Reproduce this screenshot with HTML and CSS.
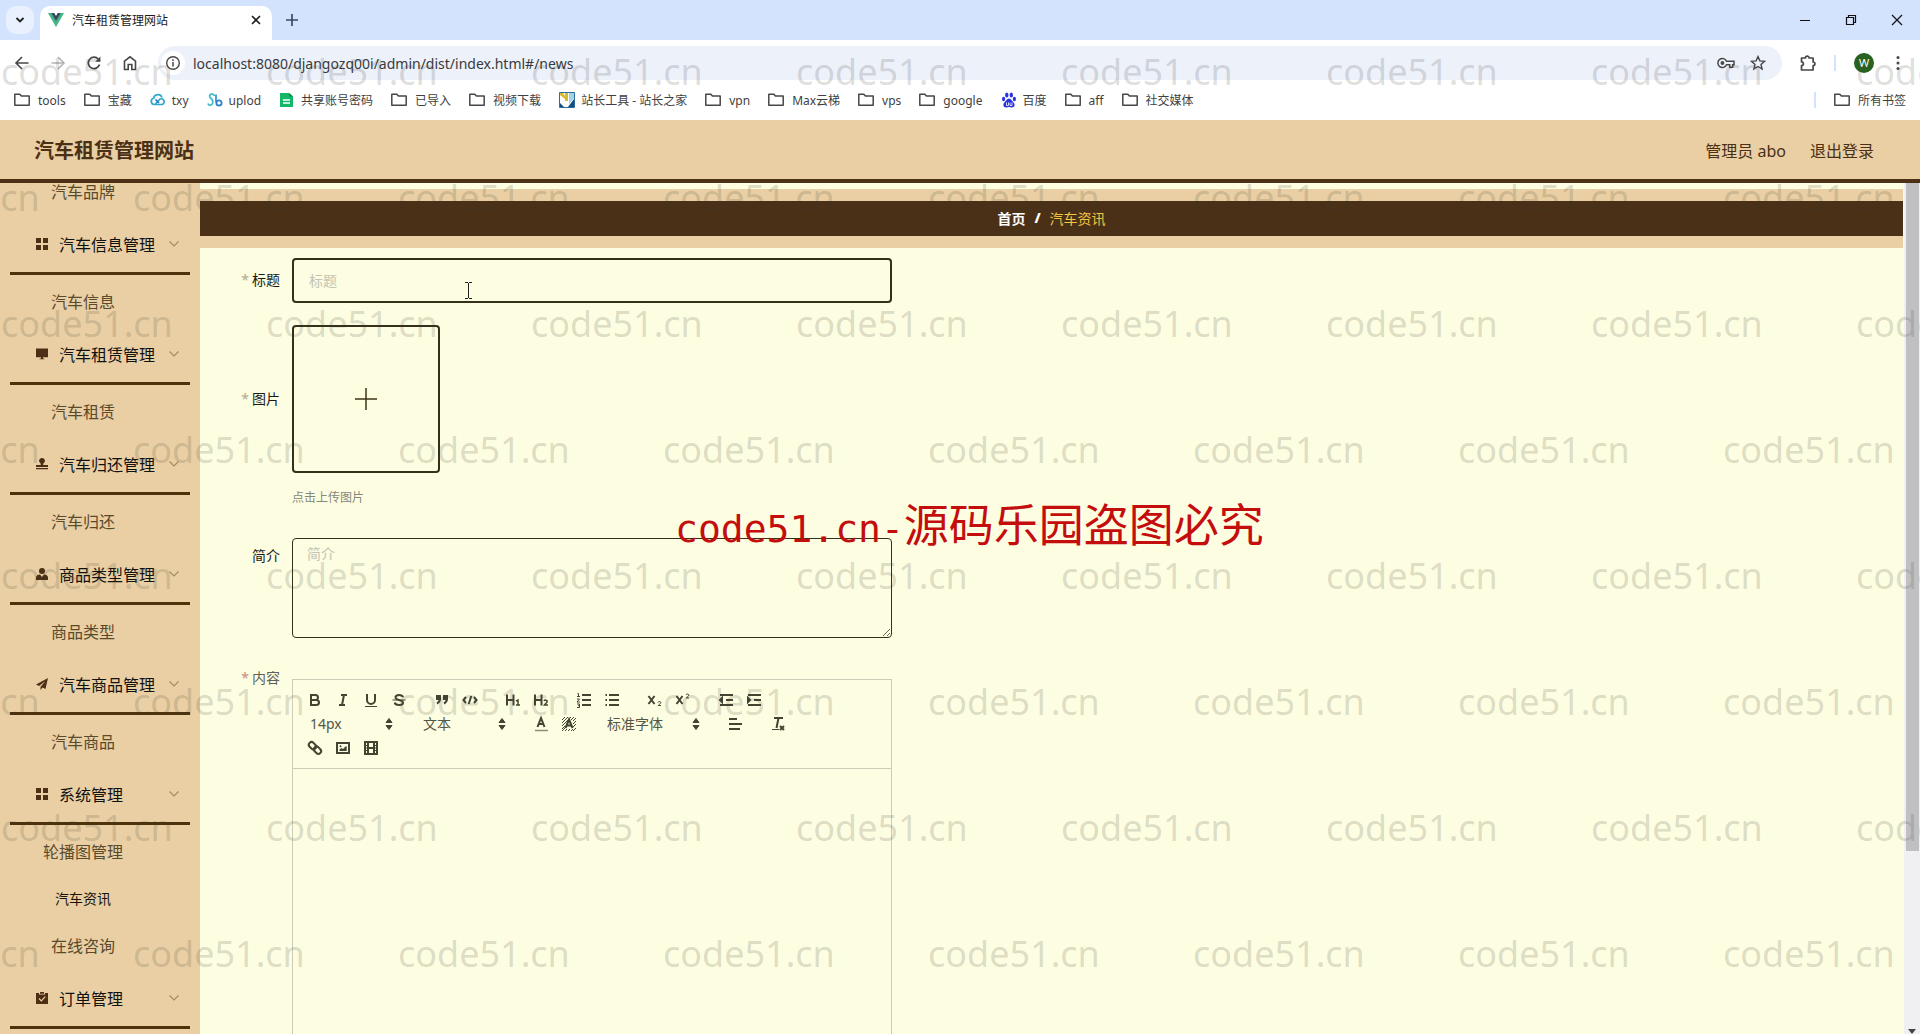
FILE: index.html
```html
<!DOCTYPE html>
<html lang="zh-CN">
<head>
<meta charset="utf-8">
<title>汽车租赁管理网站</title>
<link rel="stylesheet" href="styles.css">
</head>
<body>
<svg class="sprite" aria-hidden="true">
  <symbol id="folder" viewBox="0 0 16 16"><path d="M.8 2.200h5l1.600 1.900h7.800v9.200H.8z" fill="none" stroke="#474747" stroke-width="1.500" stroke-linejoin="round"/></symbol>
  <symbol id="chev" viewBox="0 0 12 12"><path d="M1.500 3.500 6 8l4.500-4.500" fill="none" stroke="#a58a5e" stroke-width="1.100"/></symbol>
  <symbol id="grid" viewBox="0 0 12 12"><path d="M0 0h5v5H0zM7 0h5v5H7zM0 7h5v5H0zM7 7h5v5H7z"/></symbol>
  <symbol id="updown" viewBox="0 0 18 18"><path d="M9 3.500 12 7.500H6zM9 14.500l3-4H6z" fill="#444433" stroke="#444433" stroke-linejoin="round"/></symbol>
</svg>

<header class="browser">
  <div class="tabs">
    <button class="tab-search" aria-label="搜索标签页"><svg width="12" height="12" viewBox="0 0 12 12"><path d="m2.500 4 3.500 3.500L9.500 4" fill="none" stroke="#1f1f1f" stroke-width="1.800"/></svg></button>
    <div class="tab">
      <svg width="16" height="16" viewBox="0 0 16 16"><path d="M0 1h3.300L8 9l4.700-8H16L8 15z" fill="#41b883"/><path d="M3.200 1h3L8 4.100 9.800 1h3L8 9.300z" fill="#34495e"/></svg>
      <span>汽车租赁管理网站</span>
      <button class="plain" aria-label="关闭标签页"><svg width="12" height="12" viewBox="0 0 12 12"><path d="m2 2 8 8M10 2l-8 8" stroke="#1f1f1f" stroke-width="1.600"/></svg></button>
    </div>
    <button class="plain new-tab" aria-label="新标签页"><svg width="12" height="12" viewBox="0 0 12 12"><path d="M6 0v12M0 6h12" stroke="#3c4a66" stroke-width="1.700"/></svg></button>
    <div class="window-buttons">
      <button class="plain" aria-label="最小化"><svg width="12" height="12" viewBox="0 0 12 12"><path d="M1 6.500h10" stroke="#111"/></svg></button>
      <button class="plain" aria-label="还原"><svg width="12" height="12" viewBox="0 0 12 12"><path d="M1.500 3.500h7v7h-7zM3.500 3.500v-2h7v7h-2" fill="none" stroke="#111" stroke-width="1.200"/></svg></button>
      <button class="plain" aria-label="关闭"><svg width="12" height="12" viewBox="0 0 12 12"><path d="m1 1 10 10M11 1 1 11" stroke="#111" stroke-width="1.200"/></svg></button>
    </div>
  </div>
  <div class="toolbar">
    <button class="plain" aria-label="后退"><svg width="16" height="16" viewBox="0 0 16 16"><path d="M14.500 8H2M8 2 2 8l6 6" fill="none" stroke="#474747" stroke-width="1.600"/></svg></button>
    <button class="plain" aria-label="前进"><svg width="16" height="16" viewBox="0 0 16 16"><path d="M1.500 8H14M8 2l6 6-6 6" fill="none" stroke="#b4b4b4" stroke-width="1.600"/></svg></button>
    <button class="plain" aria-label="重新加载"><svg width="16" height="16" viewBox="0 0 16 16"><path d="M13.500 9.500A5.700 5.700 0 1 1 12.200 4L14 6" fill="none" stroke="#474747" stroke-width="1.700"/><path d="M14.400 1.500v5.300H9.200z" fill="#474747"/></svg></button>
    <button class="plain" aria-label="主页"><svg width="16" height="16" viewBox="0 0 16 16"><path d="M2.500 6.200 8 1.800l5.500 4.400v8.300h-3.700v-5H6.200v5H2.500z" fill="none" stroke="#474747" stroke-width="1.600"/></svg></button>
    <div class="omnibox">
      <span class="site-info"><svg width="16" height="16" viewBox="0 0 16 16"><circle cx="8" cy="8" r="6.300" fill="none" stroke="#474747" stroke-width="1.400"/><path d="M8 7v4.500M8 4.300V6" stroke="#474747" stroke-width="1.500"/></svg></span>
      <input class="url" type="text" aria-label="地址" value="localhost:8080/djangozq00i/admin/dist/index.html#/news">
      <button class="plain" aria-label="密码"><svg width="20" height="16" viewBox="0 0 20 16"><path d="M10.500 6.200H18v3.600h-1.300v2.400h-3V9.800h-3.200a4.500 4.500 0 1 1 0-3.600z" fill="none" stroke="#474747" stroke-width="1.500"/><circle cx="6.400" cy="8" r="1.900" fill="#474747"/></svg></button>
      <button class="plain" aria-label="收藏"><svg width="16" height="16" viewBox="0 0 16 16"><path d="m8 1.600 1.900 4.300 4.700.4L11 9.400l1.100 4.600L8 11.500 3.900 14 5 9.400 1.400 6.300l4.700-.4z" fill="none" stroke="#474747" stroke-width="1.400"/></svg></button>
    </div>
    <button class="plain ext" aria-label="扩展程序"><svg width="18" height="18" viewBox="0 0 18 18"><path d="M2.500 4h4a1.800 1.800 0 0 1 3.600 0h4v4a1.800 1.800 0 0 1 0 3.600v4.400H2.500v-4.400a1.900 1.900 0 0 0 0-3.800z" fill="none" stroke="#474747" stroke-width="1.700" stroke-linejoin="round"/></svg></button>
    <i class="sep"></i>
    <button class="avatar" aria-label="个人资料">W</button>
    <button class="plain" aria-label="菜单"><svg width="16" height="16" viewBox="0 0 16 16" fill="#474747"><circle cx="8" cy="2.500" r="1.500"/><circle cx="8" cy="8" r="1.500"/><circle cx="8" cy="13.500" r="1.500"/></svg></button>
  </div>
  <nav class="bookmarks">
    <a href="#"><svg><use href="#folder"/></svg>tools</a>
    <a href="#"><svg><use href="#folder"/></svg>宝藏</a>
    <a href="#" class="site"><svg viewBox="0 0 16 16" fill="none" stroke-width="1.700"><path d="M5 12.500 10 7a2.800 2.800 0 1 1 2.300 5.500H4.300A3.200 3.200 0 0 1 3.700 6.200 4.300 4.300 0 0 1 12 5.500" stroke="#2ea9c9"/><path d="M5.500 7.500 9 11" stroke="#2878d8"/></svg>txy</a>
    <a href="#" class="site"><svg viewBox="0 0 16 16" fill="none" stroke-width="1.800"><path d="M7.200 4A2.300 2.300 0 1 0 3.300 5.800C5.500 7.500 6.500 9 5.500 11.500S1.500 13.500 1 11.500" stroke="#45bdc9"/><path d="M9 2.500v8" stroke="#3399d6"/><circle cx="12" cy="10.900" r="2.600" stroke="#3182ce"/></svg>uplod</a>
    <a href="#" class="site"><svg viewBox="0 0 16 16"><path d="M1 1h9l4 3.500V15H1z" fill="#12b76a"/><path d="M10 1v3.500h4z" fill="#0a8b4e"/><path d="M4 8h7M4 11h7" stroke="#fff" stroke-width="1.300"/></svg>共享账号密码</a>
    <a href="#"><svg><use href="#folder"/></svg>已导入</a>
    <a href="#"><svg><use href="#folder"/></svg>视频下载</a>
    <a href="#" class="site"><svg viewBox="0 0 16 16"><path d="M.5.5h15v15H.5z" fill="#fff" stroke="#2b6e9c"/><path d="M1 1h3l2 3 2-3v8H6V7L1 3z" fill="#d9b92e"/><path d="M6 1h3v8H6z" fill="#d9b92e"/><path d="M10 1h5v5l-5 6z" fill="#9fd3e8"/><path d="m15 7-6 8h6zM1 11l4 4H1z" fill="#164d7c"/></svg>站长工具 - 站长之家</a>
    <a href="#"><svg><use href="#folder"/></svg>vpn</a>
    <a href="#"><svg><use href="#folder"/></svg>Max云梯</a>
    <a href="#"><svg><use href="#folder"/></svg>vps</a>
    <a href="#"><svg><use href="#folder"/></svg>google</a>
    <a href="#" class="site"><svg viewBox="0 0 16 16" fill="#2932e1"><ellipse cx="5.800" cy="3" rx="1.700" ry="2.500"/><ellipse cx="10.300" cy="3" rx="1.700" ry="2.500"/><ellipse cx="2.600" cy="7" rx="1.600" ry="2.200"/><ellipse cx="13.400" cy="7" rx="1.600" ry="2.200"/><path d="M8 6.500c2 0 3 2.500 4.600 4 1.800 1.800 1 5-1.600 5-1.200 0-2-.400-3-.400s-1.800.400-3 .400c-2.600 0-3.400-3.200-1.600-5C5 9 6 6.500 8 6.500z"/><path d="M5.500 10.500v3h2v-3M9 10.500v3h2v-3" fill="none" stroke="#fff" stroke-width=".8"/></svg>百度</a>
    <a href="#"><svg><use href="#folder"/></svg>aff</a>
    <a href="#"><svg><use href="#folder"/></svg>社交媒体</a>
    <i class="sep"></i>
    <a href="#"><svg><use href="#folder"/></svg>所有书签</a>
  </nav>
</header>

<header class="app-header">
  <h1>汽车租赁管理网站</h1>
  <span>管理员 abo</span>
  <a href="#">退出登录</a>
</header>

<div class="app">
  <aside class="sidebar">
    <nav class="menu">
      <div class="subs"><a href="#">汽车品牌</a></div>
      <button><svg><use href="#grid"/></svg>汽车信息管理<svg class="chev"><use href="#chev"/></svg></button>
      <div class="subs"><a href="#">汽车信息</a></div>
      <button><svg viewBox="0 0 12 12"><path d="M0 .5h12v8.700H0zM5 9h2v1.200l2 1.100H3l2-1.100z"/></svg>汽车租赁管理<svg class="chev"><use href="#chev"/></svg></button>
      <div class="subs"><a href="#">汽车租赁</a></div>
      <button><svg viewBox="0 0 12 12"><path d="M6 0a2.800 2.800 0 0 1 1.800 5c-.700.700-.600 1.500-.600 2H12v2H0V7h4.800c0-.500.100-1.300-.600-2A2.800 2.800 0 0 1 6 0zM0 10h12v1.300H0z"/></svg>汽车归还管理<svg class="chev"><use href="#chev"/></svg></button>
      <div class="subs"><a href="#">汽车归还</a></div>
      <button><svg viewBox="0 0 12 12"><circle cx="6" cy="3" r="3"/><path d="M0 12V9.500C0 7.500 2 6.500 4 6.500L6 9l2-2.500c2 0 4 1 4 3V12z"/></svg>商品类型管理<svg class="chev"><use href="#chev"/></svg></button>
      <div class="subs"><a href="#">商品类型</a></div>
      <button><svg viewBox="0 0 12 12"><path d="M12 0 0 6.500l3 1.500L9.500 3 4.500 8.700V12l2-2.500L9.500 11z"/></svg>汽车商品管理<svg class="chev"><use href="#chev"/></svg></button>
      <div class="subs"><a href="#">汽车商品</a></div>
      <button><svg><use href="#grid"/></svg>系统管理<svg class="chev"><use href="#chev"/></svg></button>
      <div class="subs"><a href="#">轮播图管理</a><a href="#" class="active">汽车资讯</a><a href="#">在线咨询</a></div>
      <button><svg viewBox="0 0 12 12"><path d="M0 1h3v1.500h6V1h3v11H0zM4 0h4v1.700H4z"/><path d="m3 6.500 2.300 2.300L9.300 4.600" fill="none" stroke="#e9cfa3" stroke-width="1.200"/></svg>订单管理<svg class="chev"><use href="#chev"/></svg></button>
    </nav>
  </aside>

  <main class="main">
    <div class="crumb-wrap">
      <nav class="crumb"><a href="#">首页</a><b>/</b><span>汽车资讯</span></nav>
    </div>
    <form class="form">
      <div class="row">
        <label class="label mid" for="title"><em>*</em>标题</label>
        <input class="title" id="title" type="text" placeholder="标题">
      </div>
      <div class="row">
        <label class="label photo" for="photo"><em>*</em>图片</label>
        <div class="field">
          <button type="button" class="upload" id="photo" aria-label="上传图片"><svg width="28" height="28" viewBox="0 0 28 28"><path d="M14 3v22M3 14h22" stroke="#3d3418" stroke-width="1.500"/></svg></button>
          <p class="hint">点击上传图片</p>
        </div>
      </div>
      <div class="row">
        <label class="label" for="intro">简介</label>
        <textarea class="intro" id="intro" placeholder="简介"></textarea>
      </div>
      <div class="row grow">
        <span class="label soft" id="content-label"><em>*</em>内容</span>
        <div class="editor">
          <div class="tools">
            <div class="group">
              <button type="button" aria-label="粗体"><svg viewBox="0 0 18 18"><path d="M5 4h4.500a2.500 2.500 0 0 1 0 5H5zM5 9h5.500a2.500 2.500 0 0 1 0 5H5z"/></svg></button>
              <button type="button" aria-label="斜体"><svg viewBox="0 0 18 18"><path d="M7 4h6M5 14h6M8 14l2-10"/></svg></button>
              <button type="button" aria-label="下划线"><svg viewBox="0 0 18 18"><path d="M5 3v6a4 4 0 0 0 8 0V3"/><path d="M3 15.500h12" stroke-width="1"/></svg></button>
              <button type="button" aria-label="删除线"><svg viewBox="0 0 18 18"><path d="M2.500 9h13" stroke-width="1"/><path d="M13 6.200C12.500 4.700 11 4 9 4 7 4 5.500 5 5.500 6.500S7 8.500 9 9s4 1 4 2.700S11 14 9 14s-4-.800-4.300-2.500"/></svg></button>
            </div>
            <div class="group">
              <button type="button" aria-label="引用"><svg viewBox="0 0 18 18"><path d="M4 5h3v3H4zM11 5h3v3h-3zM7 7.500C7 10 6 11.500 4 12.500M14 7.500c0 2.500-1 4-3 5" fill="#444433"/></svg></button>
              <button type="button" aria-label="代码"><svg viewBox="0 0 18 18"><path d="M5 6 2.500 9 5 12M13 6l2.500 3-2.500 3M10.300 5 7.700 13"/></svg></button>
            </div>
            <div class="group">
              <button type="button" aria-label="标题 1"><svg viewBox="0 0 18 18"><path d="M3 3.500v11M9.500 3.500v11M3 9h6.500"/><path d="M12 10.200 14 9v5M12 14h4" stroke-width="1.500"/></svg></button>
              <button type="button" aria-label="标题 2"><svg viewBox="0 0 18 18"><path d="M3 3.500v11M9.500 3.500v11M3 9h6.500"/><path d="M12 10c.8-1.500 3.500-1 3.200.7C15 12 13 12.700 12.300 14H16" stroke-width="1.500"/></svg></button>
            </div>
            <div class="group">
              <button type="button" aria-label="有序列表"><svg viewBox="0 0 18 18"><path d="M7 4h9M7 9h9M7 14h9"/><path d="M2.500 2.500h1v3M2 5.500h3M2 8h2.500L2 11h3M2 13h2.500v3.500H2M3 14.700h1.500" stroke-width="1"/></svg></button>
              <button type="button" aria-label="无序列表"><svg viewBox="0 0 18 18"><path d="M6 4h10M6 9h10M6 14h10M2.500 4h1.500M2.500 9h1.500M2.500 14h1.500"/></svg></button>
            </div>
            <div class="group">
              <button type="button" aria-label="下标"><svg viewBox="0 0 18 18"><path d="m2.500 5 6 8M8.500 5l-6 8"/><path d="M12 11.500c.5-1.500 3-1.200 2.800.3-.2 1-2 1.700-2.600 2.700H15" stroke-width="1"/></svg></button>
              <button type="button" aria-label="上标"><svg viewBox="0 0 18 18"><path d="m2.500 5 6 8M8.500 5l-6 8"/><path d="M12 4c.5-1.500 3-1.200 2.800.3-.2 1-2 1.700-2.600 2.700H15" stroke-width="1"/></svg></button>
            </div>
            <div class="group">
              <button type="button" aria-label="减少缩进"><svg viewBox="0 0 18 18"><path d="M3 4h13M9 9h7M3 14h13"/><path d="M5 7v4L3 9z" fill="#444433"/></svg></button>
              <button type="button" aria-label="增加缩进"><svg viewBox="0 0 18 18"><path d="M3 4h13M9 9h7M3 14h13"/><path d="M3 7v4l2-2z" fill="#444433"/></svg></button>
            </div>
            <div class="group pick"><select aria-label="字号"><option>14px</option></select><svg><use href="#updown"/></svg></div>
            <div class="group pick"><select aria-label="段落"><option>文本</option></select><svg><use href="#updown"/></svg></div>
            <div class="group">
              <button type="button" aria-label="文字颜色"><svg viewBox="0 0 18 18"><path d="M3 15.500h13" stroke="#8c8c7c" stroke-width="1.500"/><path d="m5.500 12 3.500-9 3.500 9M6.500 9h5"/></svg></button>
              <button type="button" aria-label="背景颜色"><svg viewBox="0 0 18 18"><path d="M2 5l3-3M2 8l6-6M2 11l9-9M2 14l3-3M11 5l3-3M13 6l3-3M2 16l3-3M5 16l2-2M8 16l2-2M11 16l2-2M13 16l3-3M13 12l3-3M13 9l3-3" stroke-width="1"/><path d="m5.500 13 3.500-8.500 3.500 8.500M6.500 10.500h5"/></svg></button>
            </div>
            <div class="group pick wide"><select aria-label="字体"><option>标准字体</option></select><svg><use href="#updown"/></svg></div>
            <div class="group"><button type="button" aria-label="对齐"><svg viewBox="0 0 18 18"><path d="M3 4h8M3 9h13M3 14h11"/></svg></button></div>
            <div class="group"><button type="button" aria-label="清除格式"><svg viewBox="0 0 18 18"><path d="M5 3h9M9.500 3 7.500 13"/><path d="M3 14.500h7" stroke-width="1"/><path d="m11 11 4 4M15 11l-4 4"/></svg></button></div>
            <div class="group">
              <button type="button" aria-label="链接"><svg viewBox="0 0 18 18"><rect x="2.500" y="4" width="8" height="5.500" rx="2.750" transform="rotate(45 6.500 6.700)"/><rect x="7.500" y="8.500" width="8" height="5.500" rx="2.750" transform="rotate(45 11.500 11.200)"/></svg></button>
              <button type="button" aria-label="图片"><svg viewBox="0 0 18 18"><path d="M3 4h12v10H3z"/><path d="M5.500 12v-1.500l2-1.500 1.500 1 3-3 .7.700V12z" fill="#444433" stroke="none"/><circle cx="6.500" cy="7.300" r="1" fill="#444433" stroke="none"/></svg></button>
              <button type="button" aria-label="视频"><svg viewBox="0 0 18 18"><path d="M3 3h12v12H3zM6 3v12M12 3v12M6 9h6"/><path d="M3 6.500h3M3 9h3M3 11.500h3M12 6.500h3M12 9h3M12 11.500h3" stroke-width="1"/></svg></button>
            </div>
          </div>
          <div class="content" contenteditable="true" role="textbox" aria-labelledby="content-label"></div>
        </div>
      </div>
    </form>
  </main>
  <div class="scrollbar"><i class="thumb"></i><svg width="8" height="5" viewBox="0 0 8 5"><path d="M0 0h8L4 5z" fill="#444"/></svg></div>
</div>

<svg class="ibeam" width="9" height="17" viewBox="0 0 9 17"><path d="M1 .5h3M5 .5h3M4.500 1v15M1 16.500h3M5 16.500h3" stroke="#222" fill="none"/></svg>
<div class="marks" aria-hidden="true">
  <p><span>code51.cn</span><span>code51.cn</span><span>code51.cn</span><span>code51.cn</span><span>code51.cn</span><span>code51.cn</span><span>code51.cn</span><span>code51.cn</span></p>
  <p><span>code51.cn</span><span>code51.cn</span><span>code51.cn</span><span>code51.cn</span><span>code51.cn</span><span>code51.cn</span><span>code51.cn</span><span>code51.cn</span></p>
  <p><span>code51.cn</span><span>code51.cn</span><span>code51.cn</span><span>code51.cn</span><span>code51.cn</span><span>code51.cn</span><span>code51.cn</span><span>code51.cn</span></p>
  <p><span>code51.cn</span><span>code51.cn</span><span>code51.cn</span><span>code51.cn</span><span>code51.cn</span><span>code51.cn</span><span>code51.cn</span><span>code51.cn</span></p>
  <p><span>code51.cn</span><span>code51.cn</span><span>code51.cn</span><span>code51.cn</span><span>code51.cn</span><span>code51.cn</span><span>code51.cn</span><span>code51.cn</span></p>
  <p><span>code51.cn</span><span>code51.cn</span><span>code51.cn</span><span>code51.cn</span><span>code51.cn</span><span>code51.cn</span><span>code51.cn</span><span>code51.cn</span></p>
  <p><span>code51.cn</span><span>code51.cn</span><span>code51.cn</span><span>code51.cn</span><span>code51.cn</span><span>code51.cn</span><span>code51.cn</span><span>code51.cn</span></p>
  <p><span>code51.cn</span><span>code51.cn</span><span>code51.cn</span><span>code51.cn</span><span>code51.cn</span><span>code51.cn</span><span>code51.cn</span><span>code51.cn</span></p>
</div>
<div class="notice"><span>code51.cn-</span>源码乐园盗图必究</div>
</body>
</html>
```
FILE: styles.css
```css
* { box-sizing: border-box; }
body {
  margin: 0;
  height: 100vh;
  display: flex;
  flex-direction: column;
  overflow: hidden;
  position: relative;
  font-family: "Noto Sans", "Noto Sans CJK SC", sans-serif;
  font-size: 14px;
  color: #1a1a1a;
  background: #fdfde1;
}
a { color: inherit; text-decoration: none; }
button, input, select, textarea { font: inherit; color: inherit; margin: 0; }
button { border: 0; padding: 0; background: none; }
svg { display: block; flex: none; }
.sprite { position: absolute; width: 0; height: 0; }

/* Browser chrome */
.browser { background: #fff; flex: none; font-size: 12px; }
.plain { width: 28px; height: 28px; display: flex; align-items: center; justify-content: center; flex: none; }
.tabs { height: 40px; background: #d3e2fd; display: flex; align-items: center; padding-left: 6px; }
.tab-search { width: 28px; height: 28px; border-radius: 10px; background: #e9f0fe; display: flex; align-items: center; justify-content: center; }
.tab { width: 232px; height: 34px; margin-left: 6px; align-self: flex-end; background: #fff; border-radius: 10px 10px 0 0; display: flex; align-items: center; gap: 8px; padding: 0 2px 6px 8px; }
.tab span { flex: 1; }
.new-tab { margin-left: 6px; }
.window-buttons { margin-left: auto; display: flex; gap: 18px; padding-right: 9px; }
.toolbar { height: 40px; display: flex; align-items: center; gap: 8px; padding: 6px 8px 0; }
.omnibox { flex: 1; height: 34px; margin: 0 4px 0 6px; border-radius: 17px; background: #ecf1fa; display: flex; align-items: center; padding: 0 10px 0 3px; gap: 4px; }
.site-info { width: 24px; height: 24px; border-radius: 12px; background: #fff; display: flex; align-items: center; justify-content: center; }
.url { flex: 1; border: 0; background: none; padding: 0; margin-left: 4px; font-size: 14px; color: #3a3a3a; outline: 0; }
.sep { width: 2px; height: 16px; background: #d3e2fd; }
.ext + .sep { margin: 0 10px 0 4px; }
.avatar { width: 20px; height: 20px; border-radius: 50%; background: #276221; color: #fff; font-size: 11px; line-height: 20px; text-align: center; }
.toolbar .avatar { margin-right: 2px; }
.bookmarks { height: 40px; display: flex; align-items: center; gap: 18px; padding: 0 14px; color: #3f3f3f; white-space: nowrap; }
.bookmarks a { display: flex; align-items: center; gap: 8px; }
.bookmarks .site { gap: 6px; }
.bookmarks svg { width: 16px; height: 16px; }
.bookmarks .sep { margin-left: auto; }

/* Application header */
.app-header { height: 63px; flex: none; background: #e9cfa3; border-bottom: 4px solid #4b3016; color: #4b3016; display: flex; align-items: center; gap: 24px; padding: 2px 46px 0 34px; font-size: 16px; line-height: 24px; }
.app-header h1 { margin: 0 auto 0 0; font-size: 20px; line-height: 28px; }

.app { flex: 1; min-height: 0; display: flex; }

/* Sidebar, scrolled part of the way down */
.sidebar { width: 200px; flex: none; overflow: hidden; background: #e9cfa3; }
.menu { margin-top: -18px; }
.menu button { width: 180px; height: 59px; margin: 0 10px; padding: 0 10px 0 26px; border-bottom: 3px solid #4d320c; display: flex; align-items: center; font-size: 16px; color: #111; }
.menu button svg { width: 12px; height: 12px; margin-right: 11px; fill: #4b3016; }
.menu button .chev { margin: 0 0 0 auto; }
.subs { padding-top: 4px; }
.subs a { display: block; height: 47px; line-height: 47px; padding-right: 34px; text-align: center; font-size: 16px; color: #5a4a2c; }
.subs .active { font-size: 14px; line-height: 45px; color: #1a1408; }

/* Content */
.main { flex: 1; min-width: 0; overflow: hidden; padding-top: 6px; display: flex; flex-direction: column; }
.crumb-wrap { flex: none; background: #e9cfa3; padding: 12px 0; }
.crumb { height: 35px; background: #4a3017; display: flex; align-items: center; justify-content: center; gap: 9px; padding-bottom: 2px; color: #fff; font-weight: 700; }
.crumb span { color: #f3c545; font-weight: 400; }
.form { flex: 1; min-height: 0; padding-top: 10px; display: flex; flex-direction: column; }
.row { display: flex; margin-bottom: 22px; }
.label { width: 92px; flex: none; padding-right: 12px; text-align: right; line-height: 35px; }
.label em { font-style: normal; color: #b0ab90; margin-right: 3px; }
.mid { line-height: 44px; }
.photo { line-height: 147px; }
.soft { color: #606258; }
.soft em { color: #c98a78; }
.title, .intro, .editor { width: 600px; }
.title { height: 45px; border: 2px solid #35301a; border-radius: 4px; background: none; padding: 0 15px 1px; outline: 0; }
.title::placeholder, .intro::placeholder { color: #c3c4b6; opacity: 1; }
.upload { width: 148px; height: 148px; border: 2px solid #35301a; border-radius: 4px; display: flex; align-items: center; justify-content: center; }
.hint { margin: 7px 0 0; line-height: 36px; font-size: 12px; color: #86887c; }
.intro { height: 100px; border: 1px solid #35301a; border-radius: 4px; background: none; padding: 4px 14px; line-height: 21px; outline: 0; resize: vertical; }
.grow { flex: 1; min-height: 0; margin-bottom: 0; }
.editor { margin-top: 19px; border: 1px solid #ccccb8; border-bottom: 0; display: flex; flex-direction: column; }
.tools { display: flex; flex-wrap: wrap; padding: 8px; border-bottom: 1px solid #ccccb8; }
.group { display: flex; height: 24px; margin-right: 15px; }
.group button { width: 28px; height: 24px; padding: 3px 5px; }
.group svg { width: 18px; height: 18px; fill: none; stroke: #444433; stroke-width: 2; }
.pick { width: 98px; position: relative; align-items: center; color: #555546; }
.wide { width: 108px; }
.pick select { width: 100%; height: 24px; appearance: none; border: 0; background: none; padding: 0 0 2px 9px; }
.pick svg { position: absolute; right: 1px; top: 3px; stroke-width: 1; pointer-events: none; }
.content { flex: 1; outline: 0; }
.scrollbar { width: 16px; flex: none; background: #f0f0f2; display: flex; flex-direction: column; align-items: center; justify-content: space-between; margin-left: 1px; }
.thumb { width: 13px; height: 78.5%; background: #c0c0c3; }

/* Overlays */
.ibeam { position: absolute; left: 464px; top: 282px; }
.marks { position: absolute; top: 9px; left: 1px; right: 0; bottom: 0; overflow: hidden; pointer-events: none; font-size: 36px; color: rgba(60, 60, 50, .18); }
.marks p { margin: 0; height: 126px; line-height: 126px; display: flex; }
.marks p:nth-child(even) { margin-left: -133px; }
.marks span { width: 265px; flex: none; }
.notice { position: absolute; left: 675px; top: 490px; line-height: 66px; font-size: 45px; color: #c40d0d; white-space: nowrap; pointer-events: none; font-family: "Noto Sans CJK SC", sans-serif; }
.notice span { font-family: "DejaVu Sans Mono", monospace; font-size: 38px; }
```
